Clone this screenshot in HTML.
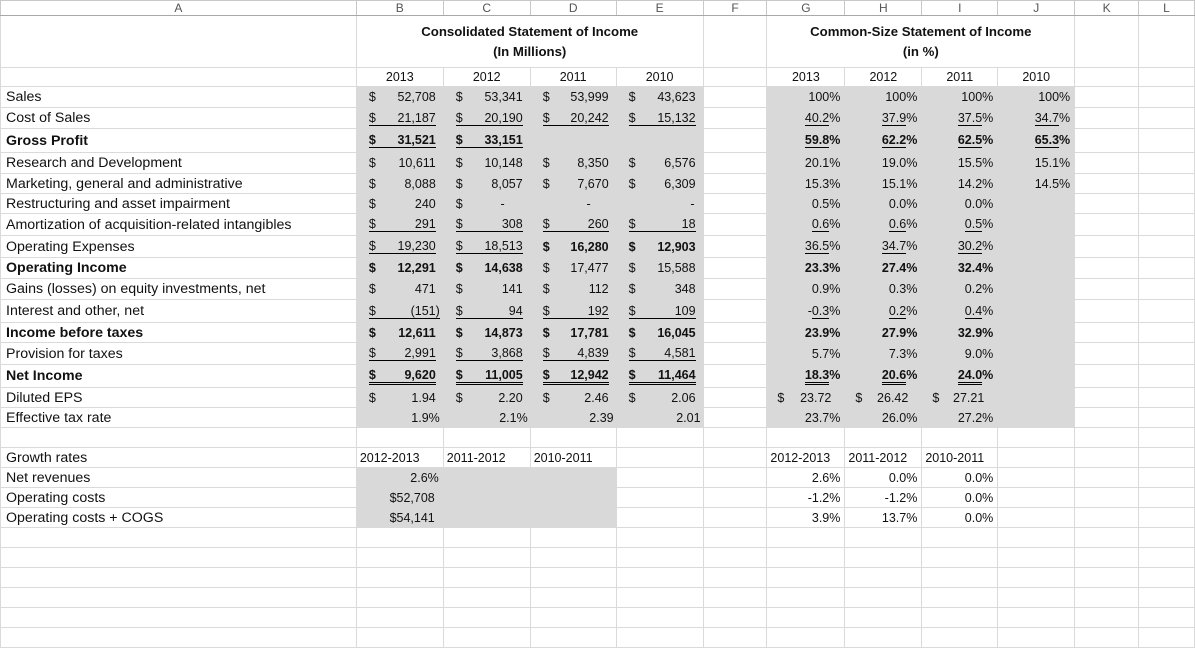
<!DOCTYPE html>
<html><head><meta charset="utf-8"><style>
*{box-sizing:border-box;margin:0;padding:0}
body{width:1195px;height:642px;overflow:hidden;background:#fff;font-family:"Liberation Sans",Arial,sans-serif;font-size:12.5px;color:#111}
table{border-collapse:collapse;table-layout:fixed;position:absolute;left:0;top:0}
td{border:1px solid #dadada;white-space:nowrap;overflow:hidden;vertical-align:middle;padding:0;line-height:14px}
tr.h td{border-color:#c8c8c8;border-bottom:1px solid #a8a8a8;color:#555;text-align:center;font-size:12px;background:#fff;line-height:12px;vertical-align:middle}
.a{padding-left:5px;font-size:14.2px}
.b{font-weight:bold}
.g{background:#d9d9d9;border-color:#d9d9d9}
.m{display:flex;justify-content:space-between;margin:0 7px 0 12px}
.u{border-bottom:1px solid #000}
.uu{border-bottom:3px double #000}
.r{text-align:right;padding-right:4px}
.p{display:inline-block}
.c{text-align:center}
.t{font-size:13.2px}
.l{padding-left:3px}
</style></head><body>
<table>
<colgroup>
<col style="width:356px"><col style="width:87px"><col style="width:87px"><col style="width:86px"><col style="width:87px"><col style="width:64px"><col style="width:78px"><col style="width:77px"><col style="width:76px"><col style="width:77px"><col style="width:64px"><col style="width:56px">
</colgroup>
<tr class="h" style="height:15px"><td>A</td><td>B</td><td>C</td><td>D</td><td>E</td><td>F</td><td>G</td><td>H</td><td>I</td><td>J</td><td>K</td><td>L</td></tr>
<tr style="height:52px"><td></td><td colspan="4" class="c b t" style="line-height:20px">Consolidated Statement of Income<br>(In Millions)</td><td></td><td colspan="4" class="c b t" style="line-height:20px">Common-Size Statement of Income<br>(in %)</td><td></td><td></td></tr>
<tr style="height:19px"><td></td><td class="c">2013</td><td class="c">2012</td><td class="c">2011</td><td class="c">2010</td><td></td><td class="c">2013</td><td class="c">2012</td><td class="c">2011</td><td class="c">2010</td><td></td><td></td></tr>

<tr style="height:21px"><td class="a">Sales</td>
<td class="g"><div class="m"><span>$</span><span>52,708</span></div></td><td class="g"><div class="m"><span>$</span><span>53,341</span></div></td><td class="g"><div class="m"><span>$</span><span>53,999</span></div></td><td class="g"><div class="m"><span>$</span><span>43,623</span></div></td><td></td>
<td class="g r">100%</td><td class="g r">100%</td><td class="g r">100%</td><td class="g r">100%</td><td></td><td></td></tr>

<tr style="height:21px"><td class="a">Cost of Sales</td>
<td class="g"><div class="m u"><span>$</span><span>21,187</span></div></td><td class="g"><div class="m u"><span>$</span><span>20,190</span></div></td><td class="g"><div class="m u"><span>$</span><span>20,242</span></div></td><td class="g"><div class="m u"><span>$</span><span>15,132</span></div></td><td></td>
<td class="g r"><span class="p u">40.2</span>%</td><td class="g r"><span class="p u">37.9</span>%</td><td class="g r"><span class="p u">37.5</span>%</td><td class="g r"><span class="p u">34.7</span>%</td><td></td><td></td></tr>

<tr style="height:24px" class="b"><td class="a">Gross Profit</td>
<td class="g"><div class="m u"><span>$</span><span>31,521</span></div></td><td class="g"><div class="m u"><span>$</span><span>33,151</span></div></td><td class="g"></td><td class="g"></td><td></td>
<td class="g r"><span class="p u">59.8</span>%</td><td class="g r"><span class="p u">62.2</span>%</td><td class="g r"><span class="p u">62.5</span>%</td><td class="g r"><span class="p u">65.3</span>%</td><td></td><td></td></tr>

<tr style="height:21px"><td class="a">Research and Development</td>
<td class="g"><div class="m"><span>$</span><span>10,611</span></div></td><td class="g"><div class="m"><span>$</span><span>10,148</span></div></td><td class="g"><div class="m"><span>$</span><span>8,350</span></div></td><td class="g"><div class="m"><span>$</span><span>6,576</span></div></td><td></td>
<td class="g r">20.1%</td><td class="g r">19.0%</td><td class="g r">15.5%</td><td class="g r">15.1%</td><td></td><td></td></tr>

<tr style="height:20px"><td class="a">Marketing, general and administrative</td>
<td class="g"><div class="m"><span>$</span><span>8,088</span></div></td><td class="g"><div class="m"><span>$</span><span>8,057</span></div></td><td class="g"><div class="m"><span>$</span><span>7,670</span></div></td><td class="g"><div class="m"><span>$</span><span>6,309</span></div></td><td></td>
<td class="g r">15.3%</td><td class="g r">15.1%</td><td class="g r">14.2%</td><td class="g r">14.5%</td><td></td><td></td></tr>

<tr style="height:20px"><td class="a">Restructuring and asset impairment</td>
<td class="g"><div class="m"><span>$</span><span>240</span></div></td><td class="g"><div class="m"><span>$</span><span style="padding-right:18px">-</span></div></td><td class="g"><div class="m"><span></span><span style="padding-right:18px">-</span></div></td><td class="g"><div class="m"><span></span><span style="padding-right:1px">-</span></div></td><td></td>
<td class="g r">0.5%</td><td class="g r">0.0%</td><td class="g r">0.0%</td><td class="g"></td><td></td><td></td></tr>

<tr style="height:22px"><td class="a">Amortization of acquisition-related intangibles</td>
<td class="g"><div class="m u"><span>$</span><span>291</span></div></td><td class="g"><div class="m u"><span>$</span><span>308</span></div></td><td class="g"><div class="m u"><span>$</span><span>260</span></div></td><td class="g"><div class="m u"><span>$</span><span>18</span></div></td><td></td>
<td class="g r"><span class="p u">0.6</span>%</td><td class="g r"><span class="p u">0.6</span>%</td><td class="g r"><span class="p u">0.5</span>%</td><td class="g"></td><td></td><td></td></tr>

<tr style="height:22px"><td class="a">Operating Expenses</td>
<td class="g"><div class="m u"><span>$</span><span>19,230</span></div></td><td class="g"><div class="m u"><span>$</span><span>18,513</span></div></td><td class="g b"><div class="m"><span>$</span><span>16,280</span></div></td><td class="g b"><div class="m"><span>$</span><span>12,903</span></div></td><td></td>
<td class="g r"><span class="p u">36.5</span>%</td><td class="g r"><span class="p u">34.7</span>%</td><td class="g r"><span class="p u">30.2</span>%</td><td class="g"></td><td></td><td></td></tr>

<tr style="height:21px"><td class="a b">Operating Income</td>
<td class="g b"><div class="m"><span>$</span><span>12,291</span></div></td><td class="g b"><div class="m"><span>$</span><span>14,638</span></div></td><td class="g"><div class="m"><span>$</span><span>17,477</span></div></td><td class="g"><div class="m"><span>$</span><span>15,588</span></div></td><td></td>
<td class="g r b">23.3%</td><td class="g r b">27.4%</td><td class="g r b">32.4%</td><td class="g"></td><td></td><td></td></tr>

<tr style="height:21px"><td class="a">Gains (losses) on equity investments, net</td>
<td class="g"><div class="m"><span>$</span><span>471</span></div></td><td class="g"><div class="m"><span>$</span><span>141</span></div></td><td class="g"><div class="m"><span>$</span><span>112</span></div></td><td class="g"><div class="m"><span>$</span><span>348</span></div></td><td></td>
<td class="g r">0.9%</td><td class="g r">0.3%</td><td class="g r">0.2%</td><td class="g"></td><td></td><td></td></tr>

<tr style="height:23px"><td class="a">Interest and other, net</td>
<td class="g"><div class="m u" style="margin-right:3px"><span>$</span><span>(151)</span></div></td><td class="g"><div class="m u"><span>$</span><span>94</span></div></td><td class="g"><div class="m u"><span>$</span><span>192</span></div></td><td class="g"><div class="m u"><span>$</span><span>109</span></div></td><td></td>
<td class="g r">-<span class="p u">0.3</span>%</td><td class="g r"><span class="p u">0.2</span>%</td><td class="g r"><span class="p u">0.4</span>%</td><td class="g"></td><td></td><td></td></tr>

<tr style="height:20px" class="b"><td class="a">Income before taxes</td>
<td class="g"><div class="m"><span>$</span><span>12,611</span></div></td><td class="g"><div class="m"><span>$</span><span>14,873</span></div></td><td class="g"><div class="m"><span>$</span><span>17,781</span></div></td><td class="g"><div class="m"><span>$</span><span>16,045</span></div></td><td></td>
<td class="g r">23.9%</td><td class="g r">27.9%</td><td class="g r">32.9%</td><td class="g"></td><td></td><td></td></tr>

<tr style="height:22px"><td class="a">Provision for taxes</td>
<td class="g"><div class="m u"><span>$</span><span>2,991</span></div></td><td class="g"><div class="m u"><span>$</span><span>3,868</span></div></td><td class="g"><div class="m u"><span>$</span><span>4,839</span></div></td><td class="g"><div class="m u"><span>$</span><span>4,581</span></div></td><td></td>
<td class="g r">5.7%</td><td class="g r">7.3%</td><td class="g r">9.0%</td><td class="g"></td><td></td><td></td></tr>

<tr style="height:23px" class="b"><td class="a">Net Income</td>
<td class="g"><div class="m uu"><span>$</span><span>9,620</span></div></td><td class="g"><div class="m uu"><span>$</span><span>11,005</span></div></td><td class="g"><div class="m uu"><span>$</span><span>12,942</span></div></td><td class="g"><div class="m uu"><span>$</span><span>11,464</span></div></td><td></td>
<td class="g r"><span class="p uu">18.3</span>%</td><td class="g r"><span class="p uu">20.6</span>%</td><td class="g r"><span class="p uu">24.0</span>%</td><td class="g"></td><td></td><td></td></tr>

<tr style="height:20px"><td class="a">Diluted EPS</td>
<td class="g"><div class="m"><span>$</span><span>1.94</span></div></td><td class="g"><div class="m"><span>$</span><span>2.20</span></div></td><td class="g"><div class="m"><span>$</span><span>2.46</span></div></td><td class="g"><div class="m"><span>$</span><span>2.06</span></div></td><td></td>
<td class="g"><div class="m" style="margin:0 13px 0 10px"><span>$</span><span>23.72</span></div></td><td class="g"><div class="m" style="margin:0 13px 0 10px"><span>$</span><span>26.42</span></div></td><td class="g"><div class="m" style="margin:0 13px 0 10px"><span>$</span><span>27.21</span></div></td><td class="g"></td><td></td><td></td></tr>

<tr style="height:20px"><td class="a">Effective tax rate</td>
<td class="g r" style="padding-right:3px">1.9%</td><td class="g r" style="padding-right:2px">2.1%</td><td class="g r" style="padding-right:2px">2.39</td><td class="g r" style="padding-right:2px">2.01</td><td></td>
<td class="g r">23.7%</td><td class="g r">26.0%</td><td class="g r">27.2%</td><td class="g"></td><td></td><td></td></tr>

<tr style="height:20px"><td></td><td></td><td></td><td></td><td></td><td></td><td></td><td></td><td></td><td></td><td></td><td></td></tr>
<tr style="height:20px"><td class="a">Growth rates</td><td class="l">2012-2013</td><td class="l">2011-2012</td><td class="l">2010-2011</td><td></td><td></td><td class="l">2012-2013</td><td class="l">2011-2012</td><td class="l">2010-2011</td><td></td><td></td><td></td></tr>
<tr style="height:20px"><td class="a">Net revenues</td><td class="g r">2.6%</td><td class="g"></td><td class="g"></td><td></td><td></td><td class="r">2.6%</td><td class="r">0.0%</td><td class="r">0.0%</td><td></td><td></td><td></td></tr>
<tr style="height:20px"><td class="a">Operating costs</td><td class="g r" style="padding-right:8px">$52,708</td><td class="g"></td><td class="g"></td><td></td><td></td><td class="r">-1.2%</td><td class="r">-1.2%</td><td class="r">0.0%</td><td></td><td></td><td></td></tr>
<tr style="height:20px"><td class="a">Operating costs + COGS</td><td class="g r" style="padding-right:8px">$54,141</td><td class="g"></td><td class="g"></td><td></td><td></td><td class="r">3.9%</td><td class="r">13.7%</td><td class="r">0.0%</td><td></td><td></td><td></td></tr>
<tr style="height:20px"><td></td><td></td><td></td><td></td><td></td><td></td><td></td><td></td><td></td><td></td><td></td><td></td></tr>
<tr style="height:20px"><td></td><td></td><td></td><td></td><td></td><td></td><td></td><td></td><td></td><td></td><td></td><td></td></tr>
<tr style="height:20px"><td></td><td></td><td></td><td></td><td></td><td></td><td></td><td></td><td></td><td></td><td></td><td></td></tr>
<tr style="height:20px"><td></td><td></td><td></td><td></td><td></td><td></td><td></td><td></td><td></td><td></td><td></td><td></td></tr>
<tr style="height:20px"><td></td><td></td><td></td><td></td><td></td><td></td><td></td><td></td><td></td><td></td><td></td><td></td></tr>
<tr style="height:20px"><td></td><td></td><td></td><td></td><td></td><td></td><td></td><td></td><td></td><td></td><td></td><td></td></tr>
</table>
</body></html>
